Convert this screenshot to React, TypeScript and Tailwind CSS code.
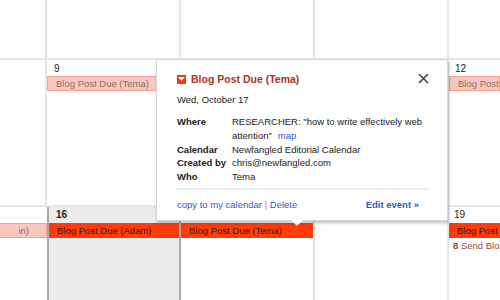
import React from 'react';

const font = { fontFamily: '"Liberation Sans", Arial, sans-serif' };

function PinkBar({ label }: { label: string }) {
  return (
    <div className="h-[15px] bg-[#f9c7bf] border border-[#f3a397] text-[9.5px] leading-[13px] text-[#8d6f69] pl-[8px] whitespace-nowrap overflow-hidden">
      {label}
    </div>
  );
}

function RedBar({ label }: { label: string }) {
  return (
    <div className="h-[15px] bg-[#ff3b0a] text-[9.5px] leading-[15px] text-[#3b1b12] pl-[8px] whitespace-nowrap overflow-hidden">
      {label}
    </div>
  );
}

export default function App() {
  return (
    <div className="relative w-[500px] h-[300px] overflow-hidden bg-white" style={font}>
      {/* week 1 */}
      <div className="grid grid-cols-[47px_134px_134px_134px_51px] h-[60px] border-b-2 border-[#e6e6e6]">
        <div className="border-r-2 border-[#e6e6e6]" />
        <div className="border-r-2 border-[#e6e6e6]" />
        <div className="border-r-2 border-[#e6e6e6]" />
        <div className="border-r-2 border-[#e6e6e6]" />
        <div />
      </div>

      {/* week 2 */}
      <div className="grid grid-cols-[47px_134px_134px_134px_51px] h-[147px] border-b-2 border-[#e6e6e6]">
        <div className="border-r-2 border-[#e6e6e6]" />
        <div className="border-r-2 border-[#e6e6e6] pt-[2px]">
          <div className="text-[10px] leading-[13px] text-[#222] pl-[7px] pb-[1px]">9</div>
          <PinkBar label="Blog Post Due (Tema)" />
        </div>
        <div className="border-r-2 border-[#e6e6e6]" />
        <div className="border-r-2 border-[#e6e6e6]" />
        <div className="pt-[2px]">
          <div className="text-[10px] leading-[13px] text-[#222] pl-[6px] pb-[1px]">12</div>
          <PinkBar label="Blog Post Due (Tema)" />
        </div>
      </div>

      {/* week 3 */}
      <div className="grid grid-cols-[47px_134px_134px_134px_51px] h-[93px]">
        <div className="pt-[16px]">
          <div className="h-[15px] bg-[#f9c7bf] border border-[#f3a397] border-l-0 text-[9.5px] leading-[13px] text-[#8d6f69] whitespace-nowrap overflow-hidden flex justify-end pr-[17px]">
            in)
          </div>
        </div>
        <div className="bg-[#ebebeb] border-x-2 border-[#a9a9a9]">
          <div className="h-[16px] text-[10px] leading-[16px] font-bold text-[#222] pl-[7px]">16</div>
          <RedBar label="Blog Post Due (Adam)" />
        </div>
        <div className="border-r-2 border-[#e6e6e6] pt-[16px]">
          <RedBar label="Blog Post Due (Tema)" />
        </div>
        <div className="border-r-2 border-[#e6e6e6]" />
        <div>
          <div className="h-[16px] text-[10px] leading-[16px] text-[#222] pl-[5px]">19</div>
          <RedBar label="Blog Post Due" />
          <div className="text-[9.5px] leading-[16px] text-[#a8473a] pl-[4px] whitespace-nowrap overflow-hidden">
            <span className="font-bold">8</span> Send Blog
          </div>
        </div>
      </div>

      {/* event popup */}
      <div className="absolute left-[156px] top-[59px] w-[292px] h-[162px] bg-white border border-[#d6d6d6] shadow-[1px_2px_3px_rgba(0,0,0,0.25)] px-[20px] pt-[10px]">
        <div className="flex items-center justify-between">
          <div className="flex items-center gap-[5px] pt-[1px]">
            <div className="w-[9px] h-[9px] bg-[#e93b18] flex items-center justify-center">
              <svg width="7" height="4" viewBox="0 0 7 4">
                <path d="M0 0 L7 0 L3.5 4 Z" fill="white" />
              </svg>
            </div>
            <span className="text-[10.5px] font-bold text-[#b0321f] leading-[16px]">Blog Post Due (Tema)</span>
          </div>
          <svg width="11" height="11" viewBox="0 0 11 11" className="mr-[-2px]">
            <path d="M1 1 L10 10 M10 1 L1 10" stroke="#444" strokeWidth="1.6" />
          </svg>
        </div>
        <div className="text-[9.5px] leading-[14px] text-[#222] mt-[6px]">Wed, October 17</div>

        <div className="grid grid-cols-[55px_1fr] text-[9.5px] leading-[13.75px] text-[#222] mt-[8px]">
          <div className="font-bold">Where</div>
          <div>
            RESEARCHER: "how to write effectively web attention"
            <span className="text-[#2a5bd6] ml-[6px]">map</span>
          </div>
          <div className="font-bold">Calendar</div>
          <div>Newfangled Editorial Calendar</div>
          <div className="font-bold">Created by</div>
          <div>chris@newfangled.com</div>
          <div className="font-bold">Who</div>
          <div>Tema</div>
        </div>

        <div className="border-t-2 border-[#ececec] mt-[4px]" />

        <div className="flex justify-between items-center text-[9.5px] leading-[14px] mt-[8px] pr-[8px]">
          <div className="text-[#2a5bd6]">
            copy to my calendar <span className="text-[#e0793a]">|</span> Delete
          </div>
          <div className="font-bold text-[#2a5bd6]">Edit event »</div>
        </div>

        {/* pointer */}
        <div className="absolute left-[134px] bottom-[-6px] w-0 h-0 border-l-[6px] border-r-[6px] border-t-[6px] border-l-transparent border-r-transparent border-t-white" />
      </div>
    </div>
  );
}
